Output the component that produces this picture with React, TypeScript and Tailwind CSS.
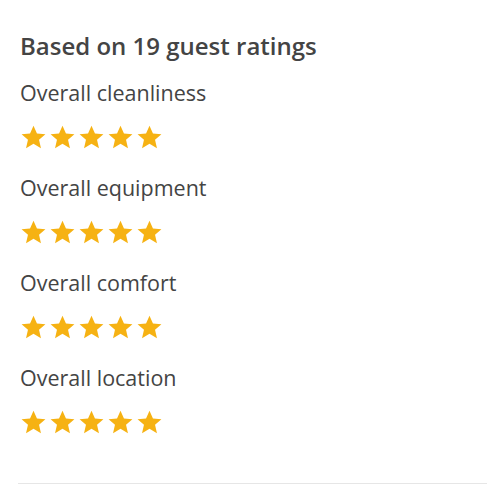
const categories = ['Overall cleanliness', 'Overall equipment', 'Overall comfort', 'Overall location'];

function Star() {
  return (
    <svg viewBox="0 0 24 24" className="w-[27px] h-[26px]" fill="#f6b213">
      <path d="M12 1.5l3.2 7.2 7.8.7-5.9 5.2 1.8 7.7L12 18.3l-6.9 4 1.8-7.7L1 9.4l7.8-.7z" />
    </svg>
  );
}

export default function App() {
  return (
    <div className="w-[500px] h-[500px] bg-white font-['Open_Sans',sans-serif] text-[#444]">
      <div className="pl-5 pr-[13px] pt-[30px]">
        <h2 className="text-[24px] font-semibold leading-8 mb-[17px]">Based on 19 guest ratings</h2>
        {categories.map((c) => (
          <div key={c} className="mb-[24px]">
            <p className="text-[21.5px] leading-7 mb-[17px]">{c}</p>
            <div className="flex gap-[2px]">
              {[0, 1, 2, 3, 4].map((i) => (
                <Star key={i} />
              ))}
            </div>
          </div>
        ))}
        <div className="mt-[48px] -ml-[2px] border-t border-[#e6e6e6]" />
      </div>
    </div>
  );
}
